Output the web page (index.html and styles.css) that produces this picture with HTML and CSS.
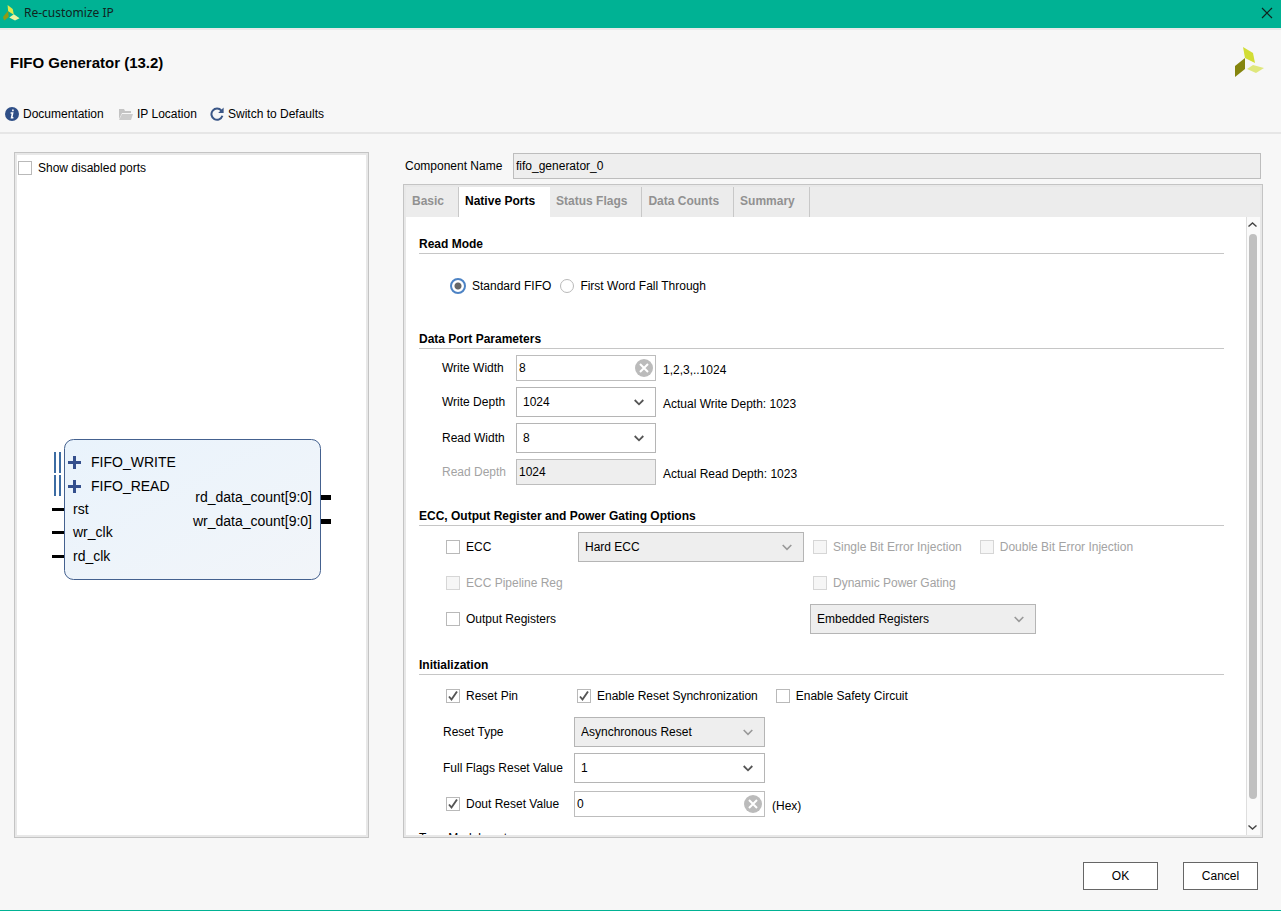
FILE: index.html
```html
<!DOCTYPE html>
<html lang="en">
<head>
    <meta charset="UTF-8">
    <meta name="viewport" content="width=device-width, initial-scale=1.0">
    <title>Re-customize IP</title>
    <link rel="stylesheet" href="styles.css">
</head>
<body>
    <div class="titlebar">
        <svg class="titlebar-logo" width="18" height="16" viewBox="0 0 30 28">
            <path d="M9 0 L18 7 L20 17 L10 11 Z" fill="#e3e84a"/>
            <path d="M1 21 L10 10 L11 21 L3 27 Z" fill="#8f9a14"/>
            <path d="M12 22 L20 16 L30 23 L22 27 Z" fill="#eef3a0"/>
        </svg>
        <span>Re-customize IP</span>
        <button class="close" aria-label="Close">
            <svg width="12" height="12" viewBox="0 0 12 12"><path d="M1 1 L11 11 M11 1 L1 11" stroke="#10241f" stroke-width="1.2"/></svg>
        </button>
    </div>

    <header class="header">
        <div class="header-top">
            <h1>FIFO Generator (13.2)</h1>
            <svg width="30" height="30" viewBox="0 0 30 30">
                <path d="M8 0 L18 6 L20 16 L10 11 Z" fill="#d2dd35"/>
                <path d="M0 19 L10 11 L10 22 L0 30 Z" fill="#85850e"/>
                <path d="M12 22 L18 18 L29 21 L21 26 Z" fill="#dfe77c"/>
            </svg>
        </div>
        <nav class="toolbar">
            <a href="#">
                <svg width="14" height="14" viewBox="0 0 14 14"><circle cx="7" cy="7" r="7" fill="#2f4f87"/><path d="M7.9 2.4 v1.8 M5.6 6 H7.6 L6.6 10.8 H8.4" fill="none" stroke="#fff" stroke-width="1.6"/></svg>
                <span class="doc">Documentation</span>
            </a>
            <a href="#">
                <svg width="14" height="12" viewBox="0 0 14 12"><path d="M0 11 V1 H5 L6 3 H12 V5 H3 Z" fill="#c4c4c4"/><path d="M3 6 H14 L12 12 H0 Z" fill="#cccccc"/></svg>
                <span class="loc">IP Location</span>
            </a>
            <a href="#">
                <svg width="14" height="14" viewBox="0 0 14 14"><path d="M11.4 3.6 A5.6 5.6 0 1 0 12.4 8.8" fill="none" stroke="#3b5787" stroke-width="2"/><path d="M13.6 0.6 V6 H8.2 Z" fill="#3b5787"/></svg>
                <span>Switch to Defaults</span>
            </a>
        </nav>
    </header>

    <main class="main">
        <section class="ports">
            <label class="check"><input type="checkbox">Show disabled ports</label>
            <div class="canvas">
                <svg class="block" width="280" height="142" viewBox="0 0 280 142">
                    <defs>
                        <linearGradient id="fill" x1="0" y1="0" x2="1" y2="1">
                            <stop offset="0" stop-color="#e9f3fc"/>
                            <stop offset="1" stop-color="#f2f5f9"/>
                        </linearGradient>
                    </defs>
                    <rect x="13.5" y="0.5" width="256" height="140" rx="9" fill="url(#fill)" stroke="#44618f"/>
                    <path d="M4 13 V34 M9 13 V34 M4 36 V57 M9 36 V57" stroke="#3c6ca3" stroke-width="2"/>
                    <path d="M17 23.5 H30 M23.5 17 V30 M17 47.5 H30 M23.5 41 V54" stroke="#344f8d" stroke-width="3"/>
                    <path d="M1 70.5 H13 M1 93.5 H13 M1 117.5 H13" stroke="#000" stroke-width="3"/>
                    <path d="M270 58.5 H280 M270 82.5 H280" stroke="#000" stroke-width="5"/>
                    <text x="40" y="28">FIFO_WRITE</text>
                    <text x="40" y="52">FIFO_READ</text>
                    <text x="22" y="75">rst</text>
                    <text x="22" y="98">wr_clk</text>
                    <text x="22" y="122">rd_clk</text>
                    <text x="261" y="63" text-anchor="end">rd_data_count[9:0]</text>
                    <text x="261" y="87" text-anchor="end">wr_data_count[9:0]</text>
                </svg>
            </div>
        </section>

        <section class="config">
            <div class="component">
                <label for="component-name">Component Name</label>
                <input type="text" id="component-name" value="fifo_generator_0" readonly>
            </div>
            <div class="tab-panel">
                <div class="tabs" role="tablist">
                    <button class="tab" role="tab">Basic</button>
                    <button class="tab active" role="tab" aria-selected="true">Native Ports</button>
                    <button class="tab" role="tab">Status Flags</button>
                    <button class="tab" role="tab">Data Counts</button>
                    <button class="tab" role="tab">Summary</button>
                </div>
                <div class="tab-body">
                    <form class="content">
                        <h2>Read Mode</h2>
                        <div class="radios">
                            <label class="check"><input type="radio" name="mode" checked>Standard FIFO</label>
                            <label class="check"><input type="radio" name="mode">First Word Fall Through</label>
                        </div>

                        <h2>Data Port Parameters</h2>
                        <div class="grid grid-data">
                            <label for="write-width">Write Width</label>
                            <div class="clearable">
                                <input type="text" id="write-width" value="8">
                                <button type="button" class="clear" aria-label="Clear"><svg width="18" height="18" viewBox="0 0 18 18"><circle cx="9" cy="9" r="9" fill="#bbb"/><path d="M5 5 L13 13 M13 5 L5 13" stroke="#fff" stroke-width="2"/></svg></button>
                            </div>
                            <span>1,2,3,..1024</span>

                            <label for="write-depth">Write Depth</label>
                            <select id="write-depth"><option>1024</option></select>
                            <span>Actual Write Depth: 1023</span>

                            <label for="read-width">Read Width</label>
                            <select id="read-width"><option>8</option></select>
                            <span></span>

                            <label for="read-depth" class="off">Read Depth</label>
                            <input type="text" id="read-depth" value="1024" disabled>
                            <span>Actual Read Depth: 1023</span>
                        </div>

                        <h2>ECC, Output Register and Power Gating Options</h2>
                        <div class="grid grid-ecc">
                            <label class="check"><input type="checkbox">ECC</label>
                            <select aria-label="ECC type" disabled><option>Hard ECC</option></select>
                            <div class="checks">
                                <label class="check off"><input type="checkbox" disabled>Single Bit Error Injection</label>
                                <label class="check off"><input type="checkbox" disabled>Double Bit Error Injection</label>
                            </div>

                            <label class="check off"><input type="checkbox" disabled>ECC Pipeline Reg</label>
                            <span></span>
                            <div class="checks">
                                <label class="check off"><input type="checkbox" disabled>Dynamic Power Gating</label>
                            </div>

                            <label class="check"><input type="checkbox">Output Registers</label>
                            <span></span>
                            <select class="registers" aria-label="Register type" disabled><option>Embedded Registers</option></select>
                        </div>

                        <h2>Initialization</h2>
                        <div class="grid grid-init">
                            <label class="check indent"><input type="checkbox" checked>Reset Pin</label>
                            <div class="checks wide">
                                <label class="check"><input type="checkbox" checked>Enable Reset Synchronization</label>
                                <label class="check"><input type="checkbox">Enable Safety Circuit</label>
                            </div>

                            <label for="reset-type">Reset Type</label>
                            <select id="reset-type" disabled><option>Asynchronous Reset</option></select>
                            <span></span>

                            <label for="full-flags">Full Flags Reset Value</label>
                            <select id="full-flags"><option>1</option></select>
                            <span></span>

                            <label class="check indent"><input type="checkbox" checked>Dout Reset Value</label>
                            <div class="clearable">
                                <input type="text" aria-label="Dout Reset Value" value="0">
                                <button type="button" class="clear" aria-label="Clear"><svg width="18" height="18" viewBox="0 0 18 18"><circle cx="9" cy="9" r="9" fill="#bbb"/><path d="M5 5 L13 13 M13 5 L5 13" stroke="#fff" stroke-width="2"/></svg></button>
                            </div>
                            <span>(Hex)</span>
                        </div>
                        <p class="more">Type Module set</p>
                    </form>
                    <div class="scrollbar">
                        <svg width="9" height="5" viewBox="0 0 9 5"><path d="M0.5 4.5 L4.5 1 L8.5 4.5" fill="none" stroke="#444" stroke-width="1.4"/></svg>
                        <div class="thumb"></div>
                        <svg width="9" height="5" viewBox="0 0 9 5"><path d="M0.5 0.5 L4.5 4 L8.5 0.5" fill="none" stroke="#444" stroke-width="1.4"/></svg>
                    </div>
                </div>
            </div>
        </section>
    </main>

    <footer class="footer">
        <button>OK</button>
        <button>Cancel</button>
    </footer>
</body>
</html>
```
FILE: styles.css
```css
* {
    box-sizing: border-box;
}
body {
    margin: 0;
    height: 100vh;
    display: flex;
    flex-direction: column;
    background: #f7f7f7;
    border-bottom: 1px solid #00b294;
    font-family: "Liberation Sans", Arial, sans-serif;
    font-size: 12px;
    color: #000;
}
button, input, select {
    font: inherit;
    color: inherit;
}
svg {
    display: block;
    flex: none;
}

/* title bar */
.titlebar {
    display: flex;
    align-items: center;
    gap: 4px;
    height: 28px;
    padding: 0 8px 3px 2px;
    background: #00b294;
    color: #10241f;
    font-family: "Noto Sans", sans-serif;
}
.close {
    margin-left: auto;
    padding: 0;
    border: 0;
    background: none;
}

/* header */
.header {
    border-top: 2px solid #e9e9e9;
    border-bottom: 2px solid #e6e6e6;
    height: 106px;
}
.header-top {
    display: flex;
    justify-content: space-between;
    align-items: center;
    height: 64px;
    padding: 0 16px 0 10px;
}
h1 {
    margin: 0;
    font-size: 15px;
}
.toolbar {
    display: flex;
    gap: 12px;
    padding: 12px 5px;
}
.toolbar a {
    display: flex;
    align-items: center;
    gap: 4px;
    height: 16px;
    color: #000;
    text-decoration: none;
}
.doc {
    min-width: 84px;
}
.loc {
    min-width: 61px;
}

/* main area */
.main {
    flex: 1;
    min-height: 0;
    display: flex;
    gap: 34px;
    padding: 18px 18px 0 14px;
}
.ports {
    flex: 0 0 355px;
    display: flex;
    flex-direction: column;
    padding: 8px 3px 2px;
    background: #fff;
    border: 1px solid #c4c4c4;
    box-shadow: inset 0 0 0 2px #e8e8e8;
}
.canvas {
    flex: 1;
    display: flex;
    align-items: center;
    justify-content: center;
    padding: 9px 2px 0 0;
}
.block text {
    font-size: 14px;
}
.config {
    flex: 1;
    min-width: 0;
    display: flex;
    flex-direction: column;
}
.component {
    display: flex;
    align-items: center;
    padding: 1px 2px 5px;
}
.component label {
    width: 108px;
}
.component input {
    flex: 1;
    background: #eee;
}
.tab-panel {
    flex: 1;
    min-height: 0;
    display: flex;
    flex-direction: column;
    border: 1px solid #c4c4c4;
    box-shadow: inset 0 0 0 2px #e8e8e8;
    padding: 2px;
    background: #fff;
}
.tabs {
    display: flex;
    flex: none;
    height: 30px;
    background: #ececec;
}
.tab {
    padding: 0 14px 3px 6px;
    border: 0;
    border-right: 1px solid #c8c8c8;
    background: none;
    font-weight: bold;
    color: #919191;
}
.tab.active {
    padding-right: 15px;
    background: #fff;
    border-right: 0;
    color: #000;
}
.tab-body {
    flex: 1;
    min-height: 0;
    display: flex;
}
.content {
    flex: 1;
    overflow: hidden;
    padding: 17px 22px 0 13px;
}
h2 {
    margin: 0;
    height: 20px;
    line-height: 20px;
    border-bottom: 1px solid #c6c6c6;
    font-size: 12px;
}
.more {
    margin: 10px 0 0;
    line-height: 19px;
}

/* form rows */
.radios {
    display: flex;
    gap: 9px;
    padding: 22px 0 33px 31px;
    height: 75px;
}
.grid {
    display: grid;
    align-items: center;
    row-gap: 6px;
    padding: 6px 0 21px;
}
.grid-data {
    grid-template-columns: 68px 140px 1fr;
    column-gap: 6px;
    padding-left: 23px;
}
.grid-ecc {
    grid-template-columns: 126px 226px 1fr;
    grid-auto-rows: 30px;
    column-gap: 6px;
    padding-left: 27px;
}
.grid-init {
    grid-template-columns: 125px 191px 1fr;
    grid-auto-rows: 30px;
    column-gap: 6px;
    padding: 6px 0 0 24px;
}
.grid span {
    padding: 3px 0 0 1px;
}
.check {
    display: flex;
    align-items: center;
    gap: 6px;
    white-space: nowrap;
}
.indent {
    padding-left: 3px;
}
.checks {
    display: flex;
    gap: 18px;
    padding-left: 3px;
}
.wide {
    grid-column: 2 / 4;
}
.registers {
    width: 226px;
}
.off {
    color: #a3a3a3;
}

/* controls */
input[type="text"] {
    width: 100%;
    height: 26px;
    padding: 0 2px;
    border: 1px solid #bdbdbd;
    border-radius: 0;
    outline: none;
}
input[type="text"]:disabled {
    background: #eee;
    color: #000;
}
.clearable {
    position: relative;
}
.clear {
    position: absolute;
    top: 4px;
    right: 3px;
    padding: 0;
    border: 0;
    background: none;
}
select {
    appearance: none;
    height: 30px;
    padding: 0 6px;
    border: 1px solid #b5b5b5;
    border-radius: 0;
    color: #000;
    background: #fff url("data:image/svg+xml,%3Csvg xmlns='http://www.w3.org/2000/svg' width='10' height='7'%3E%3Cpath d='M0.7 1 L5 5.3 L9.3 1' fill='none' stroke='%23555' stroke-width='1.8'/%3E%3C/svg%3E") no-repeat right 11px center;
}
select:disabled {
    opacity: 1;
    color: #000;
    background-color: #eee;
    background-image: url("data:image/svg+xml,%3Csvg xmlns='http://www.w3.org/2000/svg' width='10' height='7'%3E%3Cpath d='M0.7 1 L5 5.3 L9.3 1' fill='none' stroke='%23999' stroke-width='1.6'/%3E%3C/svg%3E");
}
input[type="checkbox"] {
    appearance: none;
    flex: none;
    width: 14px;
    height: 14px;
    margin: 0;
    border: 1px solid #b9b9b9;
    background: #fff;
}
input[type="checkbox"]:checked {
    background: #fff url("data:image/svg+xml,%3Csvg xmlns='http://www.w3.org/2000/svg' width='12' height='12'%3E%3Cpath d='M2 6.5 L4.5 9.5 L10 1.5' fill='none' stroke='%23555' stroke-width='1.9'/%3E%3C/svg%3E") no-repeat center;
}
input[type="checkbox"]:disabled {
    border-color: #d6d6d6;
    background: #f6f6f6;
}
input[type="radio"] {
    appearance: none;
    flex: none;
    width: 14px;
    height: 14px;
    margin: 0;
    border: 1px solid #b9b9b9;
    border-radius: 50%;
    background: #fff;
}
input[type="radio"]:checked {
    width: 16px;
    height: 16px;
    border: 2px solid #4d83c4;
    background: radial-gradient(circle, #666 3px, #fff 4px);
}

/* scrollbar */
.scrollbar {
    flex: none;
    width: 14px;
    display: flex;
    flex-direction: column;
    align-items: center;
    gap: 7px;
    padding: 5px 2px 5px 0;
    border-left: 1px solid #dedede;
    background: #fafafa;
}
.thumb {
    width: 8px;
    height: 565px;
    border-radius: 4px;
    background: #c0c0c0;
}
.scrollbar svg:last-child {
    margin-top: auto;
}

/* footer */
.footer {
    display: flex;
    justify-content: flex-end;
    gap: 25px;
    padding: 24px 23px 20px;
}
.footer button {
    width: 75px;
    height: 28px;
    padding: 0;
    border: 1px solid #666;
    background: #fff;
}
```
